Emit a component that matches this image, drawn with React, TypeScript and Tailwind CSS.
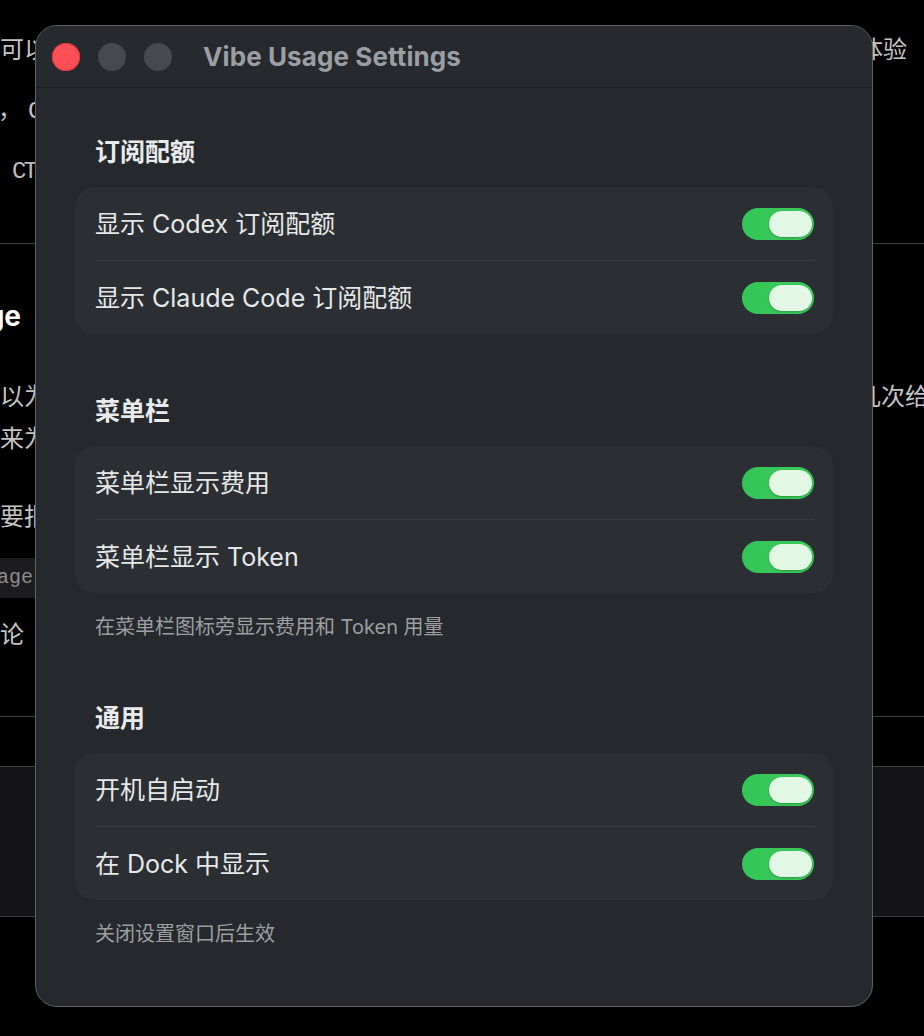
import React from "react";

const FONT = { fontFamily: 'Inter, "Noto Sans CJK SC", "Noto Sans", sans-serif' };
const CJK = { fontFamily: '"Noto Sans CJK SC", "Noto Sans", sans-serif' };
const MONO = { fontFamily: '"Liberation Mono", "DejaVu Sans Mono", monospace' };

function Toggle() {
  return (
    <div className="flex h-[32px] w-[72px] shrink-0 items-center justify-end rounded-full bg-gradient-to-r from-[#33c557] to-[#3dcb5c] pr-[2px]">
      <div className="h-[26px] w-[43px] rounded-full bg-[#e3f7e5] shadow-[0_1px_2px_rgba(0,0,0,0.25)]" />
    </div>
  );
}

function Row({ label }: { label: string }) {
  return (
    <div className="flex h-[73px] items-center justify-between pl-[20px] pr-[19px]">
      <span className="text-[25px] leading-[34px] text-[#e6e7e8]">{label}</span>
      <Toggle />
    </div>
  );
}

function Section({
  title,
  rows,
  note,
}: {
  title: string;
  rows: string[];
  note?: string;
}) {
  return (
    <div className="flex flex-col">
      <div className="pl-[20px] text-[25px] font-bold leading-[34px] text-[#e9eaeb]">{title}</div>
      <div className="mt-[18px] flex flex-col rounded-[20px] bg-[#2b2f33]">
        <Row label={rows[0]} />
        <div className="ml-[20px] mr-[19px] h-px bg-[#383c40]" />
        <Row label={rows[1]} />
      </div>
      {note && (
        <div className="mt-[20px] pl-[20px] text-[20px] leading-[28px] text-[#9c9ea1]">{note}</div>
      )}
    </div>
  );
}

function Background() {
  const t = "text-[24px] leading-[36px] text-[#c4c4c4] whitespace-nowrap";
  return (
    <div className="flex flex-col" style={CJK}>
      <div className="mt-[30px] flex h-[36px] items-center">
        <div className="w-[859px] shrink-0 overflow-hidden">
          <span className={t}>可以</span>
        </div>
        <span className={t}>体验</span>
      </div>
      <div className="mt-[26px] flex h-[36px] items-center">
        <span className="-ml-[2px] whitespace-nowrap text-[24px] text-[#c4c4c4]">
          ，<span style={MONO} className="ml-[6px]">C</span>
        </span>
      </div>
      <div className="mt-[26px] flex h-[36px] items-center pl-[12px]">
        <span className="whitespace-nowrap text-[24px] tracking-[-3px] text-[#bdbdbd]" style={MONO}>
          CT
        </span>
      </div>
      <div className="mt-[53px] h-px bg-[#3d3d40]" />
      <div className="mt-[52px] flex h-[40px] items-center">
        <div className="flex w-[21px] justify-end overflow-hidden">
          <span className="whitespace-nowrap text-[28px] font-bold text-white" style={FONT}>
            ge
          </span>
        </div>
      </div>
      <div className="mt-[41px] flex h-[36px] items-center">
        <div className="w-[857px] shrink-0 overflow-hidden">
          <span className={t}>以为</span>
        </div>
        <span className={t}>几次给</span>
      </div>
      <div className="mt-[6px] flex h-[36px] items-center">
        <span className={t}>来为</span>
      </div>
      <div className="mt-[42px] flex h-[36px] items-center">
        <span className={t}>要报</span>
      </div>
      <div className="mt-[25px] flex h-[40px] w-[60px] items-center bg-[#1c1c1e]">
        <span className="-ml-[3px] whitespace-nowrap text-[20px] text-[#8d8d8f]" style={MONO}>
          age
        </span>
      </div>
      <div className="mt-[17px] flex h-[36px] items-center">
        <span className={t}>论</span>
      </div>
      <div className="mt-[65px] h-px bg-[#3d3d40]" />
      <div className="mt-[49px] h-[151px] border-y border-[#3d3d40] bg-[#141416]" />
    </div>
  );
}

export default function App() {
  return (
    <div className="relative h-[1036px] w-[924px] overflow-hidden bg-black" style={FONT}>
      <Background />
      <div className="absolute left-[35px] top-[25px] flex h-[982px] w-[838px] flex-col overflow-hidden rounded-[22px] border border-[#5d6064] bg-[#25292d]">
        <div className="flex h-[62px] shrink-0 items-center border-b border-[#1b1d20] bg-[#26292d] pl-[16px]">
          <div className="h-[28px] w-[28px] rounded-full bg-[#fe4f57] ring-1 ring-inset ring-[#e0373f]" />
          <div className="ml-[18px] h-[28px] w-[28px] rounded-full bg-[#46494d]" />
          <div className="ml-[18px] h-[28px] w-[28px] rounded-full bg-[#46494d]" />
          <span className="ml-[31px] text-[26px] font-bold tracking-[0.1px] text-[#9b9ea2]">
            Vibe Usage Settings
          </span>
        </div>
        <div className="flex flex-col gap-[60px] px-[39px] pt-[47px]">
          <Section title="订阅配额" rows={["显示 Codex 订阅配额", "显示 Claude Code 订阅配额"]} />
          <Section
            title="菜单栏"
            rows={["菜单栏显示费用", "菜单栏显示 Token"]}
            note="在菜单栏图标旁显示费用和 Token 用量"
          />
          <Section title="通用" rows={["开机自启动", "在 Dock 中显示"]} note="关闭设置窗口后生效" />
        </div>
      </div>
    </div>
  );
}
